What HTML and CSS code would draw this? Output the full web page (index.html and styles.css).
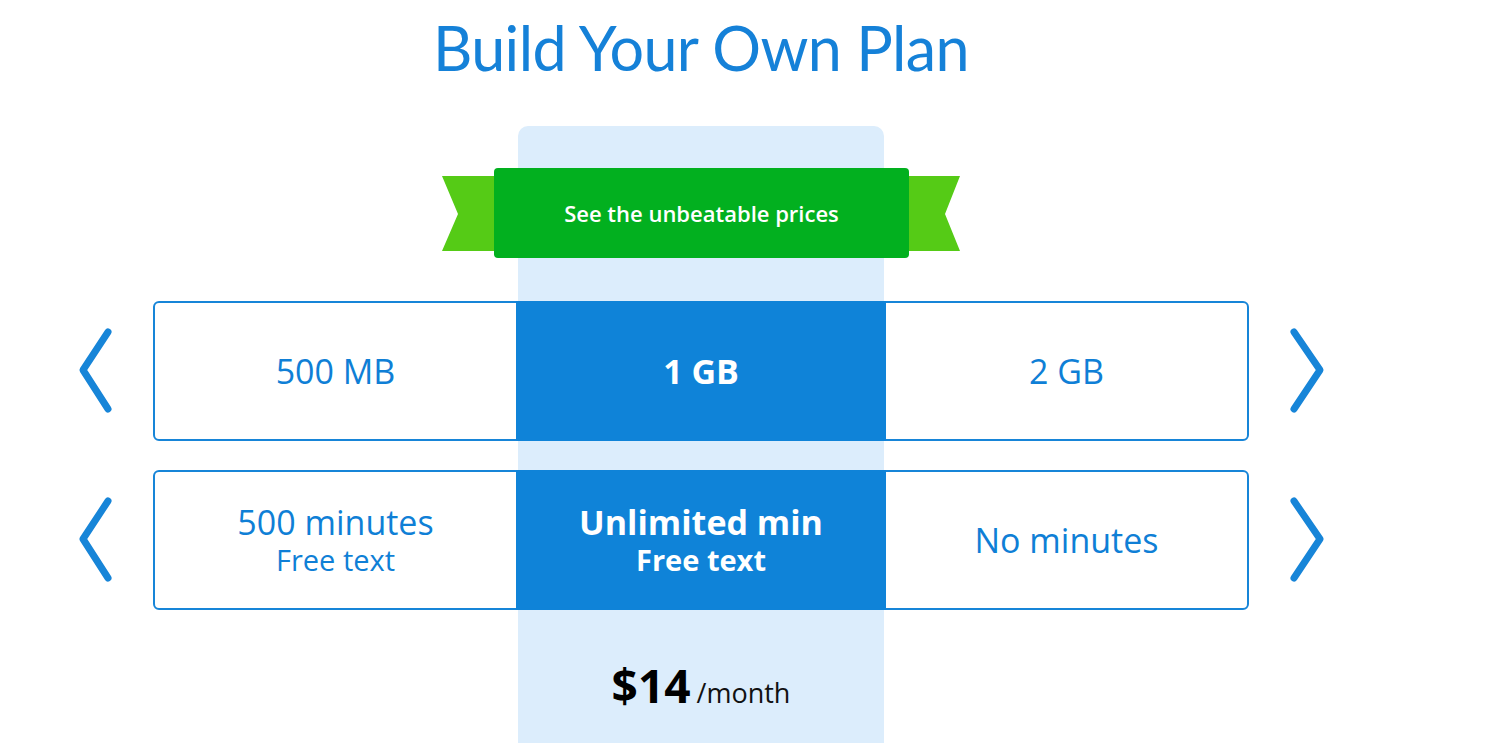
FILE: index.html
```html
<!DOCTYPE html>
<html lang="en">
<head>
<meta charset="utf-8">
<title>Build Your Own Plan</title>
<link rel="stylesheet" href="styles.css">
</head>
<body>
<header class="header">
  <h1 class="title">Build Your Own Plan</h1>
</header>
<main class="stage">
  <div class="highlight"></div>

  <div class="ribbon">
    <svg class="tail" width="52" height="75" viewBox="0 0 52 75"><polygon points="0,0 52,0 52,75 0,75 16,38" fill="#55cb16"/></svg>
    <div class="ribbon-main">See the unbeatable prices</div>
    <svg class="tail" width="51" height="75" viewBox="0 0 51 75"><polygon points="0,0 51,0 36,38 51,75 0,75" fill="#55cb16"/></svg>
  </div>

  <div class="option-row row-data">
    <div class="arrow-slot left">
      <svg width="40" height="90" viewBox="0 0 40 90"><polyline points="30,6 5,44 30,83" fill="none" stroke="#1785d8" stroke-width="7" stroke-linecap="round" stroke-linejoin="round"/></svg>
    </div>
    <div class="box">
      <div class="cell side"><div class="main-line">500 MB</div></div>
      <div class="cell selected"><div class="main-line">1 GB</div></div>
      <div class="cell side"><div class="main-line">2 GB</div></div>
    </div>
    <div class="arrow-slot right">
      <svg width="40" height="90" viewBox="0 0 40 90"><polyline points="6,6 32,44 6,83" fill="none" stroke="#1785d8" stroke-width="7" stroke-linecap="round" stroke-linejoin="round"/></svg>
    </div>
  </div>

  <div class="option-row row-minutes">
    <div class="arrow-slot left">
      <svg width="40" height="90" viewBox="0 0 40 90"><polyline points="30,6 5,44 30,83" fill="none" stroke="#1785d8" stroke-width="7" stroke-linecap="round" stroke-linejoin="round"/></svg>
    </div>
    <div class="box">
      <div class="cell side"><div class="main-line">500 minutes</div><div class="sub-line">Free text</div></div>
      <div class="cell selected"><div class="main-line">Unlimited min</div><div class="sub-line">Free text</div></div>
      <div class="cell side"><div class="main-line">No minutes</div></div>
    </div>
    <div class="arrow-slot right">
      <svg width="40" height="90" viewBox="0 0 40 90"><polyline points="6,6 32,44 6,83" fill="none" stroke="#1785d8" stroke-width="7" stroke-linecap="round" stroke-linejoin="round"/></svg>
    </div>
  </div>

  <div class="price"><span class="amount">$14</span><span class="period">/month</span></div>
</main>
</body>
</html>
```

FILE: styles.css
```css
* { box-sizing: border-box; }
html, body { margin: 0; padding: 0; background: #fff; }
body {
  font-family: "Open Sans", "Noto Sans", sans-serif;
  color: #0f7fd6;
  overflow: hidden;
}
.header {
  height: 126px;
  width: 1402px;
  padding-left: 153px;
  padding-right: 153px;
}
.title {
  margin: 0;
  padding-top: 10px;
  font-family: "Lato", "Open Sans", sans-serif;
  font-weight: 400;
  font-size: 61px;
  letter-spacing: -0.6px;
  line-height: 76px;
  color: #1581d8;
  text-align: center;
  width: 1096px;
}
.stage {
  display: grid;
  grid-template-columns: 153px 363px 370px 363px 1fr;
}
.highlight {
  grid-column: 3;
  grid-row: 1 / 6;
  margin: 0 2px;
  background: #dcedfc;
  border-radius: 10px 10px 0 0;
}
.ribbon {
  grid-column: 2 / 5;
  grid-row: 1;
  justify-self: center;
  margin-top: 42px;
  display: flex;
  align-items: center;
  height: 90px;
}
.tail { display: block; }
.ribbon-main {
  width: 415px;
  height: 90px;
  background: #02b01f;
  border-radius: 4px;
  color: #fff;
  font-size: 22px;
  font-weight: 600;
  display: flex;
  align-items: center;
  justify-content: center;
}
.option-row {
  grid-column: 1 / -1;
  display: flex;
  align-items: center;
  height: 140px;
}
.row-data { grid-row: 2; margin-top: 43px; }
.row-minutes { grid-row: 3; margin-top: 29px; }
.arrow-slot {
  width: 153px;
  display: flex;
  align-items: center;
}
.arrow-slot.left { justify-content: flex-start; padding-left: 78px; }
.arrow-slot.right { width: auto; padding-left: 39px; }
.box {
  width: 1096px;
  height: 140px;
  border: 2px solid #1785d8;
  border-radius: 6px;
  display: flex;
  background: #fff;
}
.cell {
  display: flex;
  flex-direction: column;
  align-items: center;
  justify-content: center;
}
.cell.side { width: 361px; }
.cell.selected {
  width: 370px;
  margin: -2px 0;
  background: #0f83d8;
  color: #fff;
  font-weight: 700;
}
.main-line { display: block; font-size: 34px; line-height: 40px; height: 40px; }
.sub-line { display: block; font-size: 29px; line-height: 36px; height: 36px; }
.price {
  grid-column: 3;
  grid-row: 4;
  display: flex;
  justify-content: center;
  align-items: baseline;
  padding-top: 45px;
  padding-bottom: 65px;
  color: #000;
}
.amount { font-size: 46px; font-weight: 700; line-height: 60px; }
.period { font-size: 27px; margin-left: 6px; color: #111; }
```
